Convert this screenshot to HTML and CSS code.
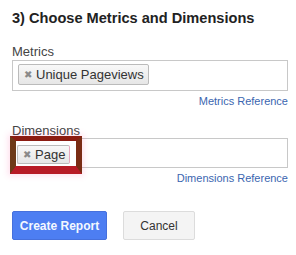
FILE: index.html
```html
<!DOCTYPE html>
<html>
<head>
<meta charset="utf-8">
<link rel="stylesheet" href="styles.css">
</head>
<body>
<div class="panel">
  <h2 class="title">3) Choose Metrics and Dimensions</h2>
  <div class="field field-metrics">
    <div class="label">Metrics</div>
    <div class="input">
      <span class="chip"><span class="x">&#x2716;</span>Unique Pageviews</span>
    </div>
    <a class="ref">Metrics Reference</a>
  </div>
  <div class="field field-dims">
    <div class="label">Dimensions</div>
    <div class="input">
      <span class="highlight"></span>
      <span class="chip"><span class="x">&#x2716;</span>Page</span>
    </div>
    <a class="ref">Dimensions Reference</a>
  </div>
  <div class="actions">
    <button class="btn btn-primary">Create Report</button>
    <button class="btn btn-default">Cancel</button>
  </div>
</div>
</body>
</html>
```
FILE: styles.css
```css
html, body {
  margin: 0;
  padding: 0;
  background: #fff;
}
body {
  font-family: "Liberation Sans", Arial, sans-serif;
  color: #333;
}
.panel {
  width: 296px;
  height: 255px;
  padding: 9px 8px 0 12px;
  box-sizing: border-box;
}
.title {
  margin: 0;
  font-size: 14.6px;
  line-height: 18px;
  font-weight: bold;
  color: #222;
}
.field {
  display: flex;
  flex-direction: column;
}
.field-metrics {
  margin-top: 16px;
}
.field-dims {
  margin-top: 15px;
}
.label {
  font-size: 13px;
  line-height: 17px;
  color: #444;
}
.field-dims .label {
  line-height: 15px;
}
.input {
  position: relative;
  border: 1px solid #c8c8c8;
  box-sizing: border-box;
  height: 31px;
  padding: 3px 5px;
  display: flex;
  align-items: flex-start;
}
.field-dims .input {
  height: 30px;
  padding: 6px 4px 0;
}
.chip {
  position: relative;
  display: inline-flex;
  align-items: center;
  height: 21px;
  box-sizing: border-box;
  border: 1px solid #bbb;
  border-radius: 2px;
  background: linear-gradient(#f8f8f8, #e6e6e6);
  padding: 0 4px 0 5px;
  font-size: 13px;
  color: #333;
}
.field-dims .chip {
  height: 19px;
  border-right-color: #e8a8c0;
}
.x {
  font-size: 10px;
  color: #8a8a8a;
  margin-right: 4px;
}
.highlight {
  position: absolute;
  left: -3px;
  top: -3px;
  width: 72px;
  height: 38px;
  box-sizing: border-box;
  border-style: solid;
  border-width: 5px 6px 8px 6px;
  border-color: #8c1c12 #7a2c14 #b81b26 #6e3a18;
  box-shadow: 0 0 6px 2px rgba(255, 90, 160, 0.18);
}
.ref {
  align-self: flex-end;
  font-size: 11px;
  line-height: 14px;
  margin-top: 3px;
  color: #3b66b0;
}
.actions {
  display: flex;
  gap: 16px;
  margin-top: 26px;
}
.btn {
  height: 29px;
  box-sizing: border-box;
  font-family: "Liberation Sans", Arial, sans-serif;
  font-size: 12px;
  border-radius: 2px;
  padding: 0;
}
.btn-primary {
  width: 95px;
  background: #4d7ef2;
  border: 1px solid #4670dc;
  color: #f4f8ff;
  font-weight: bold;
}
.btn-default {
  width: 72px;
  background: #f4f4f4;
  border: 1px solid #dcdcdc;
  color: #333;
}
```
